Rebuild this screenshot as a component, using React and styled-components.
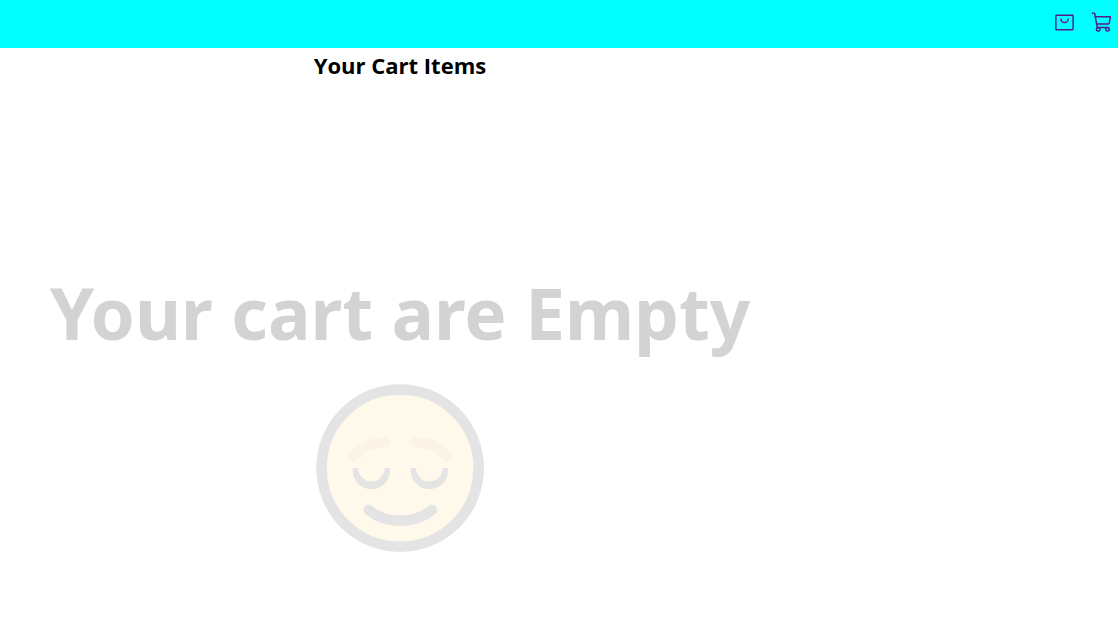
import React from "react";
import styled, { createGlobalStyle } from "styled-components";
import { PiShoppingBag } from "react-icons/pi";

const GlobalStyle = createGlobalStyle`
  * {
    box-sizing: border-box;
  }
  body {
    margin: 0;
    background: #ffffff;
    color: #000000;
    font-family: "Open Sans", "Segoe UI", sans-serif;
  }
`;

const Header = styled.header`
  display: flex;
  justify-content: flex-end;
  align-items: center;
  height: 48px;
  padding: 0 4px 3px;
  background: #00ffff;
`;

const Nav = styled.nav`
  display: flex;
  gap: 15px;
`;

const NavLink = styled.a`
  display: flex;
  color: #551a8b;
  font-size: 23px;
`;

const CartPanel = styled.main`
  display: flex;
  flex-direction: column;
  align-items: center;
  width: 100%;
  max-width: 800px;
`;

const Title = styled.h1`
  margin: 0;
  font-size: 22px;
  line-height: 34px;
  font-weight: 700;
`;

const EmptyState = styled.section`
  display: flex;
  flex-direction: column;
  align-items: center;
  padding-top: 183px;
`;

const EmptyMessage = styled.h2`
  margin: 0;
  color: #d3d3d3;
  font-family: "Noto Sans", "Segoe UI", sans-serif;
  font-size: 71px;
  line-height: 96px;
  font-weight: 700;
  text-align: center;
`;

const Face = styled.svg`
  width: 168px;
  height: 168px;
  margin-top: 23px;
`;

function CartIcon() {
  return (
    <svg
      width="1em"
      height="1em"
      viewBox="0 0 256 256"
      fill="none"
      stroke="currentColor"
      strokeWidth="16"
      strokeLinecap="round"
      strokeLinejoin="round"
      aria-hidden="true"
    >
      <path d="M184 184H69.8L41.9 30.6A8 8 0 0 0 34.1 24H16" />
      <circle cx="80" cy="204" r="20" />
      <circle cx="184" cy="204" r="20" />
      <path d="M62.5 144h125.6a15.9 15.9 0 0 0 15.7-13.1L216 64H48" />
    </svg>
  );
}

function CalmFace() {
  return (
    <Face viewBox="0 0 168 168" fill="none" role="img" aria-label="Calm face">
      <circle cx="84.1" cy="84.1" r="78.6" fill="#fff9eb" stroke="#e4e4e4" strokeWidth="10.6" />
      <g stroke="#fcf3e7" strokeWidth="10.5" strokeLinecap="round">
        <path d="M37.3 72Q50 59 68.7 58" />
        <path d="M131.3 72Q118.6 59 99.9 58" />
      </g>
      <g fill="#e4e4e4">
        <path d="M36.7 84H42a13.3 13.3 0 0 0 26.6 0H74v2.6a18.65 18.65 0 0 1-37.3 0Z" />
        <path d="M94.7 84h5.3a13.3 13.3 0 0 0 26.6 0h5.4v2.6a18.65 18.65 0 0 1-37.3 0Z" />
      </g>
      <path
        d="M52.7 126C70 140.4 98.7 140.4 116 126"
        stroke="#e4e4e4"
        strokeWidth="10.5"
        strokeLinecap="round"
      />
    </Face>
  );
}

export default function App() {
  return (
    <>
      <GlobalStyle />
      <Header>
        <Nav aria-label="Store">
          <NavLink href="#products" aria-label="Products">
            <PiShoppingBag />
          </NavLink>
          <NavLink href="#cart" aria-label="Cart">
            <CartIcon />
          </NavLink>
        </Nav>
      </Header>
      <CartPanel>
        <Title>Your Cart Items</Title>
        <EmptyState>
          <EmptyMessage>Your cart are Empty</EmptyMessage>
          <CalmFace />
        </EmptyState>
      </CartPanel>
    </>
  );
}
